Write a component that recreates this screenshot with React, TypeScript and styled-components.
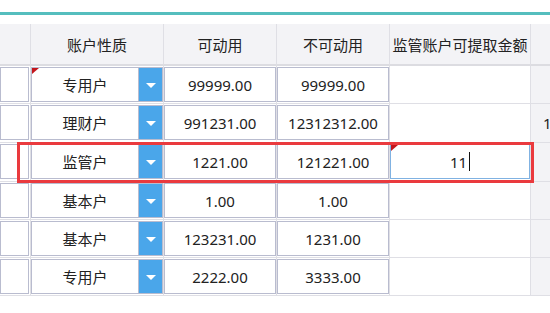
import React from "react";
import styled, { createGlobalStyle } from "styled-components";

const GlobalStyle = createGlobalStyle`
  html, body { margin: 0; padding: 0; background: #fff; }
  body {
    font-family: "Noto Sans", "Noto Sans CJK SC", sans-serif;
    font-size: 15px;
    color: #222;
    overflow: hidden;
  }
`;

const COLS = "31px 133px 113px 113px 141px 1fr";
const LINE = "#dfdfe5";
const BOX = "#b9bccf";

const Page = styled.div`
  position: relative;
  width: 550px;
  height: 313px;
  overflow: hidden;
  padding-top: 12px;
  box-sizing: border-box;
`;

const AccentBar = styled.div`
  height: 3px;
  background: #55bebe;
`;

const Table = styled.div`
  margin-top: 9px;
  display: flex;
  flex-direction: column;
`;

const HeaderRow = styled.div`
  display: grid;
  grid-template-columns: ${COLS};
  height: 42px;
`;

const HeaderCell = styled.div`
  display: flex;
  align-items: center;
  justify-content: center;
  background: #f3f3f6;
  border-right: 1px solid ${LINE};
  border-bottom: 2px solid #dcdce1;
  white-space: nowrap;
  overflow: visible;
  min-width: 0;
  &:last-child { border-right: none; }
`;

const Row = styled.div<{ $h: number }>`
  display: grid;
  grid-template-columns: ${COLS};
  height: ${(p) => p.$h}px;
`;

const Cell = styled.div<{ $muted?: boolean; $gapRight?: boolean }>`
  box-sizing: border-box;
  padding: 1px ${(p) => (p.$gapRight ? "1px" : "0")} 1px 0;
  border-right: 1px solid ${LINE};
  border-bottom: 1px solid ${LINE};
  background: ${(p) => (p.$muted ? "#f3f3f6" : "#fff")};
  min-width: 0;
  overflow: hidden;
  &:last-child { border-right: none; }
`;

const Box = styled.div`
  position: relative;
  box-sizing: border-box;
  height: 35px;
  border: 1px solid ${BOX};
  background: #fff;
  display: flex;
  align-items: center;
  justify-content: center;
  white-space: nowrap;
`;

const SelectBox = styled(Box)`
  justify-content: stretch;
`;

const SelectText = styled.div`
  flex: 1;
  text-align: center;
`;

const DropButton = styled.div`
  width: 23px;
  align-self: stretch;
  background: #4aa6ea;
  border-left: 1px solid ${BOX};
  display: flex;
  align-items: center;
  justify-content: center;
`;

const Caret = styled.div`
  width: 0;
  height: 0;
  border-left: 5px solid transparent;
  border-right: 5px solid transparent;
  border-top: 5px solid #fff;
  margin-top: 1px;
`;

const Flag = styled.div`
  position: absolute;
  top: 0;
  left: 0;
  width: 0;
  height: 0;
  border-top: 6px solid #c3161c;
  border-right: 7px solid transparent;
`;

const EditBox = styled.div`
  position: relative;
  box-sizing: border-box;
  height: 35px;
  border: 1px solid #80b2e2;
  background: #fff;
  display: flex;
  align-items: center;
  justify-content: center;
`;

const TextCursor = styled.span`
  display: inline-block;
  width: 1px;
  height: 19px;
  background: #111;
  margin-left: 2px;
`;

const SideText = styled.div`
  height: 100%;
  display: flex;
  align-items: center;
  padding-left: 12px;
`;

const Highlight = styled.div`
  position: absolute;
  left: 17px;
  top: 142px;
  width: 517px;
  height: 41px;
  box-sizing: border-box;
  border: 3px solid #ea3a3e;
  pointer-events: none;
`;

type RowData = {
  type: string;
  avail: string;
  locked: string;
  h: number;
  flag?: boolean;
  edit?: string;
  side?: string;
};

const rows: RowData[] = [
  { type: "专用户", avail: "99999.00", locked: "99999.00", h: 38, flag: true },
  { type: "理财户", avail: "991231.00", locked: "12312312.00", h: 39, side: "1" },
  { type: "监管户", avail: "1221.00", locked: "121221.00", h: 39, edit: "11" },
  { type: "基本户", avail: "1.00", locked: "1.00", h: 38 },
  { type: "基本户", avail: "123231.00", locked: "1231.00", h: 38 },
  { type: "专用户", avail: "2222.00", locked: "3333.00", h: 38 },
];

export default function App() {
  return (
    <Page>
      <GlobalStyle />
      <AccentBar />
      <Table>
        <HeaderRow>
          <HeaderCell />
          <HeaderCell>账户性质</HeaderCell>
          <HeaderCell>可动用</HeaderCell>
          <HeaderCell>不可动用</HeaderCell>
          <HeaderCell>监管账户可提取金额</HeaderCell>
          <HeaderCell />
        </HeaderRow>
        {rows.map((r, i) => (
          <Row key={i} $h={r.h}>
            <Cell $gapRight>
              <Box />
            </Cell>
            <Cell>
              <SelectBox>
                {r.flag && <Flag />}
                <SelectText>{r.type}</SelectText>
                <DropButton>
                  <Caret />
                </DropButton>
              </SelectBox>
            </Cell>
            <Cell>
              <Box>{r.avail}</Box>
            </Cell>
            <Cell>
              <Box>{r.locked}</Box>
            </Cell>
            <Cell>
              {r.edit !== undefined && (
                <EditBox>
                  <Flag />
                  <span>{r.edit}</span>
                  <TextCursor />
                </EditBox>
              )}
            </Cell>
            <Cell $muted>{r.side && <SideText>{r.side}</SideText>}</Cell>
          </Row>
        ))}
      </Table>
      <Highlight />
    </Page>
  );
}
